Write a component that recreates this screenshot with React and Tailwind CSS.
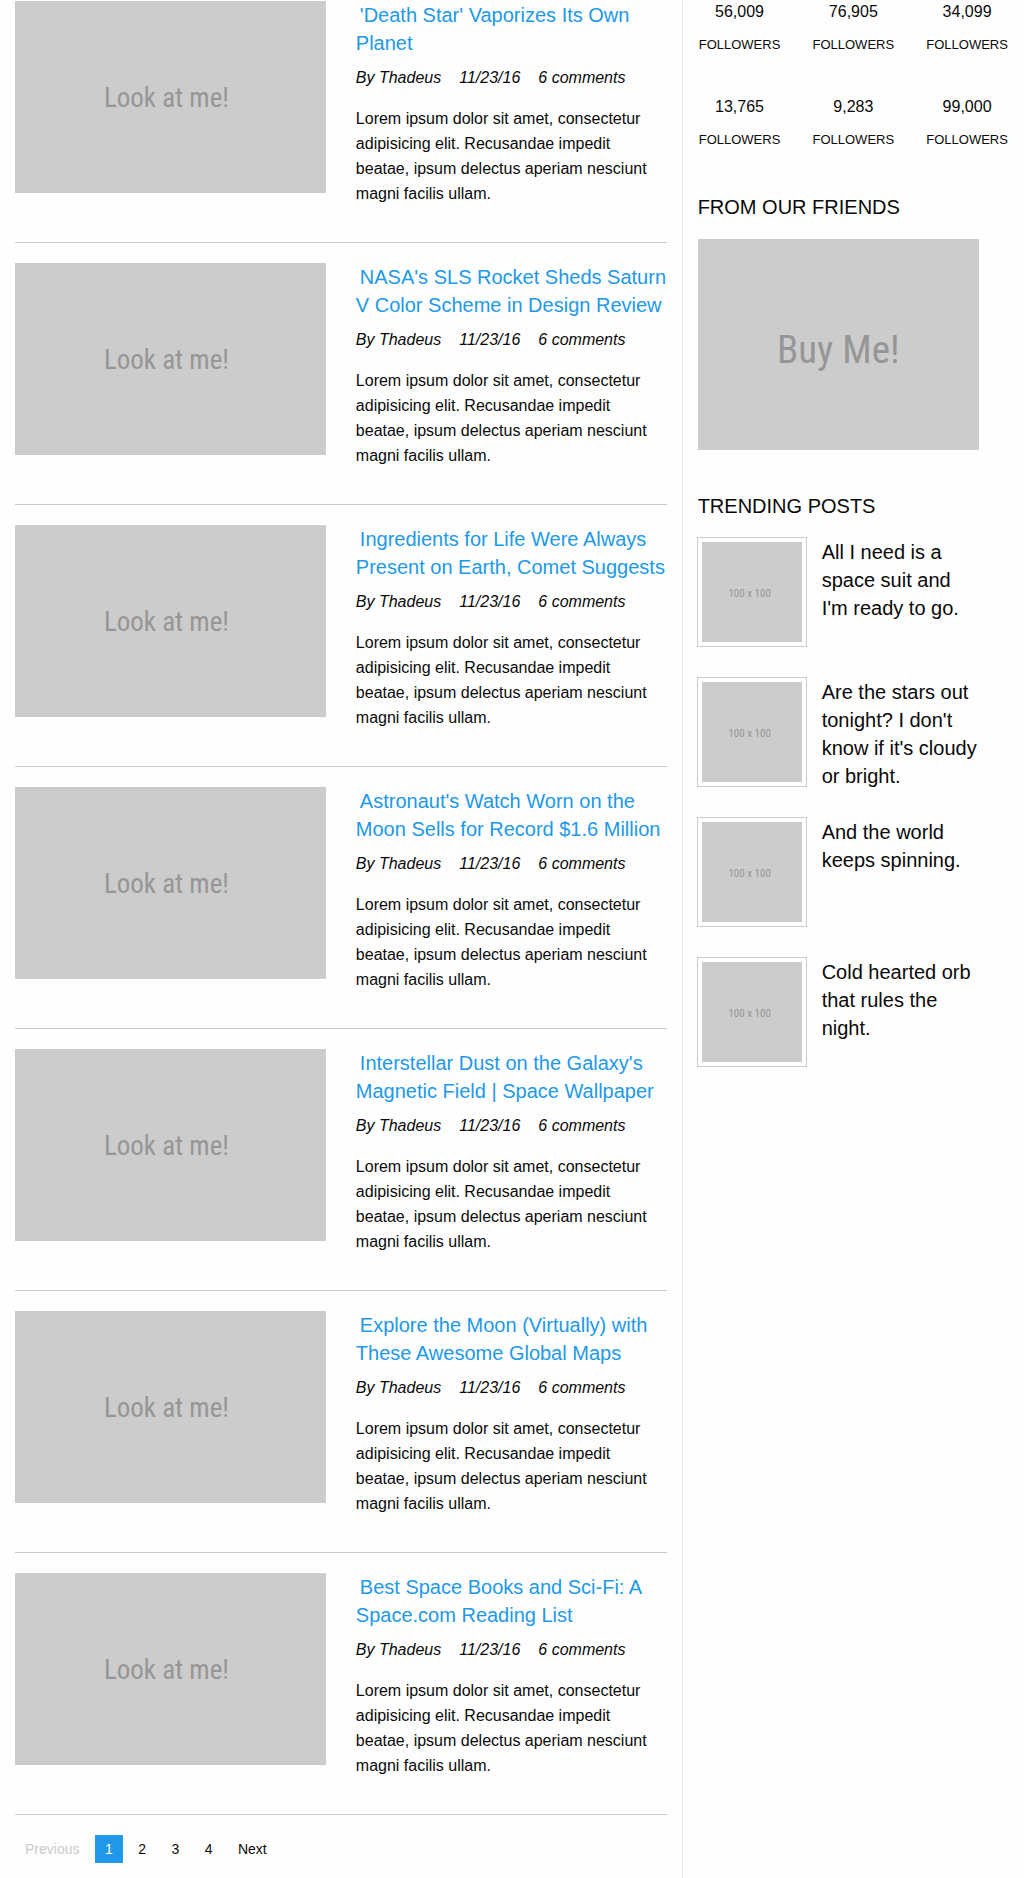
import React from 'react';

const POSTS = [
  "'Death Star' Vaporizes Its Own Planet",
  "NASA's SLS Rocket Sheds Saturn V Color Scheme in Design Review",
  'Ingredients for Life Were Always Present on Earth, Comet Suggests',
  "Astronaut's Watch Worn on the Moon Sells for Record $1.6 Million",
  "Interstellar Dust on the Galaxy's Magnetic Field | Space Wallpaper",
  'Explore the Moon (Virtually) with These Awesome Global Maps',
  'Best Space Books and Sci-Fi: A Space.com Reading List',
];

const FOLLOWERS = ['56,009', '76,905', '34,099', '13,765', '9,283', '99,000'];

const TRENDING = [
  "All I need is a space suit and I'm ready to go.",
  "Are the stars out tonight? I don't know if it's cloudy or bright.",
  'And the world keeps spinning.',
  'Cold hearted orb that rules the night.',
];

const placeholder =
  "flex items-center justify-center whitespace-nowrap bg-[#cccccc] text-[#969696] font-['Liberation_Sans_Narrow','Roboto_Condensed','Liberation_Sans',sans-serif]";

function Post({ title }) {
  return (
    <article className="mb-5 grid grid-cols-2 items-start gap-[30px] border-b border-[#cacaca] pb-9">
      <div className={`${placeholder} aspect-[311/192] pr-2 pt-0.5 text-[27px]`}>Look at me!</div>
      <div>
        <h2 className="mb-2 text-xl leading-7">
          <a href="#post" className="ml-1 text-[#2199e8]">
            {title}
          </a>
        </h2>
        <p className="mb-4 flex gap-[18px] italic leading-[25px]">
          <span>By Thadeus</span>
          <span>11/23/16</span>
          <span>6 comments</span>
        </p>
        <p className="leading-[25px]">
          Lorem ipsum dolor sit amet, consectetur adipisicing elit. Recusandae impedit beatae, ipsum
          delectus aperiam nesciunt magni facilis ullam.
        </p>
      </div>
    </article>
  );
}

function Pagination() {
  return (
    <nav aria-label="Pagination" className="text-base">
      <span className="mr-px inline-block px-2.5 py-[3px] text-sm leading-[22px] text-[#cacaca]">Previous</span>{' '}
      <span
        aria-current="page"
        className="mr-px inline-block bg-[#2199e8] px-2.5 py-[3px] text-sm leading-[22px] text-[#fefefe]"
      >
        1
      </span>{' '}
      {['2', '3', '4', 'Next'].map((label) => (
        <React.Fragment key={label}>
          <a href="#page" className="mr-px inline-block px-2.5 py-[3px] text-sm leading-[22px]">
            {label}
          </a>{' '}
        </React.Fragment>
      ))}
    </nav>
  );
}

export default function App() {
  return (
    <div className="min-h-screen bg-[#fefefe] pt-px text-base text-[#0a0a0a] font-['Liberation_Sans',Arial,sans-serif]">
      <div className="flex min-h-[calc(100vh-1px)]">
        <main className="w-2/3 border-r border-[#e6e6e6] px-[15px]">
          {POSTS.map((title) => (
            <Post key={title} title={title} />
          ))}
          <Pagination />
        </main>
        <aside className="w-1/3">
          <ul className="grid grid-cols-3 gap-y-[39px] text-center">
            {FOLLOWERS.map((count) => (
              <li key={count}>
                <p className="mb-[9px] leading-[22px]">{count}</p>
                <p className="text-[13px] leading-[25px]">FOLLOWERS</p>
              </li>
            ))}
          </ul>
          <div className="ml-[15px] mr-[45px] pt-[41px]">
            <h2 className="mb-[18px] text-xl leading-7">FROM OUR FRIENDS</h2>
            <div className={`${placeholder} aspect-[4/3] pt-3 text-[39px]`}>Buy Me!</div>
            <h2 className="mb-[18px] mt-[42px] text-xl leading-7">TRENDING POSTS</h2>
            <ul className="flex flex-col gap-7">
              {TRENDING.map((text) => (
                <li key={text} className="flex min-h-28 items-start gap-4">
                  <div className="shrink-0 border-4 border-[#fefefe] ring-1 ring-[#cacaca]">
                    <div className={`${placeholder} size-[100px] pr-1 pt-1 text-[11px]`}>100 x 100</div>
                  </div>
                  <p className="text-xl leading-7">{text}</p>
                </li>
              ))}
            </ul>
          </div>
        </aside>
      </div>
    </div>
  );
}
